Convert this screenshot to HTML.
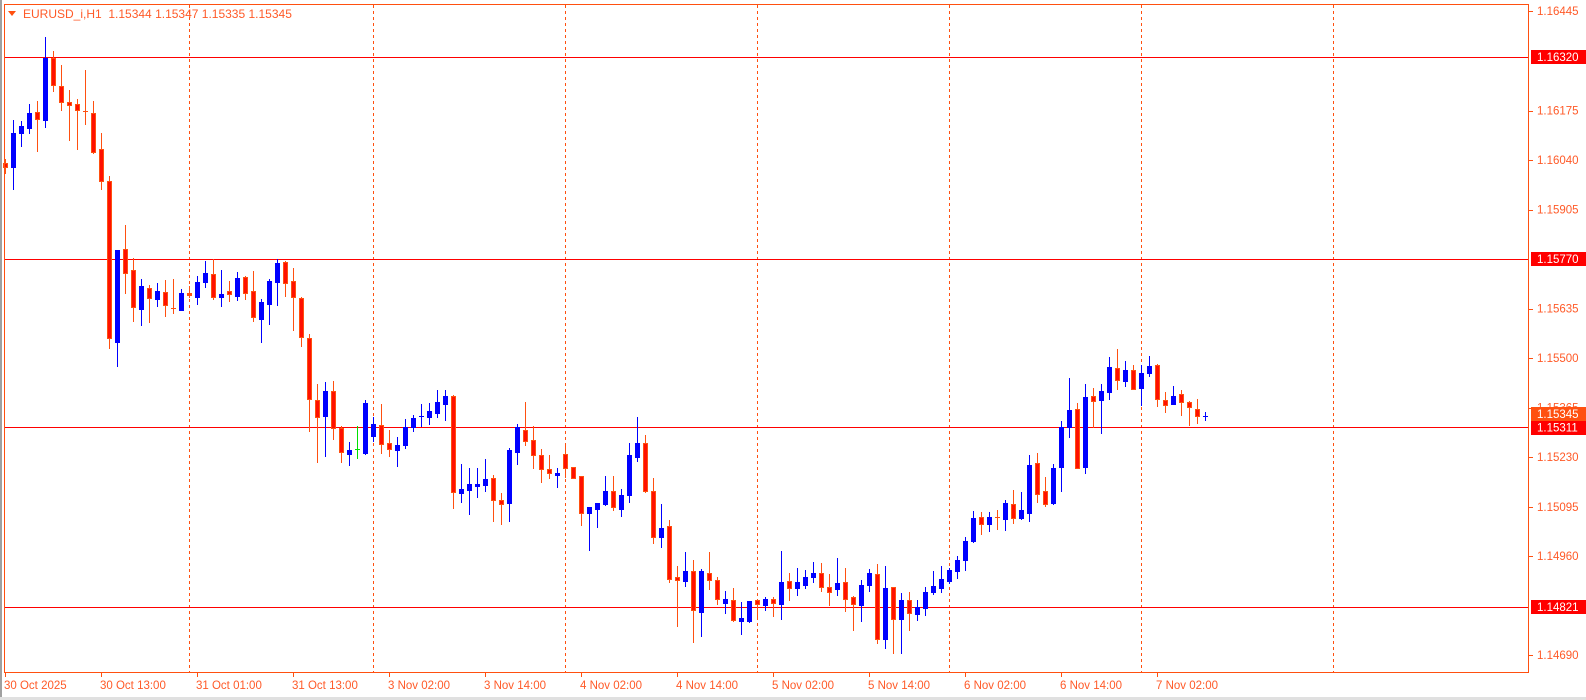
<!DOCTYPE html>
<html><head><meta charset="utf-8"><style>
html,body{margin:0;padding:0;background:#fff;width:1586px;height:700px;overflow:hidden}
svg{display:block}
text{font-family:"Liberation Sans",sans-serif;font-size:11.5px}
</style></head><body>
<svg id="s" width="1586" height="700" xmlns="http://www.w3.org/2000/svg">
<rect x="0" y="0" width="1586" height="700" fill="#fff"/>
<rect x="0" y="0" width="2" height="700" fill="#a0a0a0"/>
<rect x="0" y="697" width="1586" height="3" fill="#e0e0e0"/>
<g id="grid" stroke="#ff5010" stroke-width="1" stroke-dasharray="3,3" shape-rendering="crispEdges">
<line x1="189.5" y1="5" x2="189.5" y2="673"/><line x1="373.5" y1="5" x2="373.5" y2="673"/>
<line x1="565.5" y1="5" x2="565.5" y2="673"/><line x1="757.5" y1="5" x2="757.5" y2="673"/>
<line x1="949.5" y1="5" x2="949.5" y2="673"/><line x1="1141.5" y1="5" x2="1141.5" y2="673"/>
<line x1="1333.5" y1="5" x2="1333.5" y2="673"/>
</g>
<g stroke="#ff0000" stroke-width="1" shape-rendering="crispEdges">
<line x1="4" y1="57.5" x2="1529" y2="57.5"/><line x1="4" y1="259.5" x2="1529" y2="259.5"/>
<line x1="4" y1="427.5" x2="1529" y2="427.5"/><line x1="4" y1="607.5" x2="1529" y2="607.5"/>
</g>
<g id="candles" shape-rendering="crispEdges"></g>
<rect x="4.5" y="4.5" width="1524" height="668" fill="none" stroke="#ff5010" stroke-width="1" shape-rendering="crispEdges"/>
<polygon points="8,11 16,11 12,16" fill="#ff5010"/>
<text x="23" y="18" fill="#ff5a28" style="font-size:12px;white-space:pre" xml:space="preserve">EURUSD_i,H1  1.15344 1.15347 1.15335 1.15345</text>
<g id="axis" fill="#ff5a28"></g>
</svg>
<script>
var D=[[163,167,159,173,'r'],[133,167,120,189,'b'],[126,133,121,146,'b'],[113,128,104,133,'b'],[112,119,101,151,'r'],[58,120,37,127,'b'],[58,85,51,91,'r'],[86,102,65,110,'r'],[102,105,90,140,'r'],[104,110,99,149,'r'],[111,111,70,124,'r'],[113,152,101,153,'r'],[149,181,133,189,'r'],[181,338,176,348,'r'],[250,342,250,366,'b'],[249,273,225,293,'r'],[270,307,258,321,'r'],[286,309,279,325,'b'],[288,298,285,322,'r'],[291,299,283,306,'b'],[292,305,280,316,'r'],[308,309,279,313,'r'],[293,310,289,310,'b'],[293,295,286,297,'r'],[282,297,276,304,'b'],[273,282,261,287,'b'],[274,297,259,299,'r'],[294,297,270,306,'b'],[291,294,281,301,'r'],[278,296,272,300,'b'],[277,293,276,299,'r'],[291,317,271,321,'r'],[302,319,299,342,'b'],[281,304,279,324,'b'],[263,282,259,305,'b'],[262,283,261,296,'r'],[281,297,268,330,'r'],[298,337,297,346,'r'],[338,399,334,431,'r'],[400,417,384,462,'r'],[391,416,382,456,'b'],[391,428,381,439,'r'],[428,452,426,462,'r'],[450,454,442,465,'b'],[449,449,426,458,'g'],[403,453,400,454,'b'],[424,436,417,441,'b'],[425,444,404,453,'r'],[443,449,430,456,'r'],[445,450,437,466,'b'],[427,445,419,448,'b'],[418,427,415,431,'b'],[416,417,404,426,'b'],[411,417,403,424,'b'],[402,413,390,417,'b'],[396,404,390,420,'b'],[396,492,395,508,'r'],[489,493,464,502,'b'],[484,490,468,514,'b'],[484,486,468,497,'b'],[479,485,459,491,'b'],[478,500,475,521,'r'],[500,504,493,524,'r'],[450,503,448,521,'b'],[427,452,424,464,'b'],[430,441,402,445,'r'],[440,455,426,468,'r'],[455,469,449,482,'r'],[469,473,455,478,'r'],[473,475,468,487,'b'],[454,468,446,477,'r'],[467,478,467,478,'r'],[476,513,476,525,'r'],[507,513,507,550,'b'],[503,509,503,527,'b'],[491,504,476,505,'b'],[491,507,476,510,'r'],[495,509,489,516,'b'],[455,495,443,502,'b'],[443,457,417,461,'b'],[443,491,435,492,'r'],[491,537,478,543,'r'],[528,537,504,547,'b'],[526,579,520,582,'r'],[577,580,566,626,'r'],[571,581,552,586,'b'],[571,610,560,642,'r'],[571,612,569,636,'b'],[573,580,552,589,'r'],[580,599,577,604,'r'],[599,603,591,613,'b'],[600,620,588,621,'r'],[618,621,602,634,'b'],[601,621,601,622,'b'],[600,604,600,619,'r'],[599,605,597,610,'b'],[599,603,597,616,'r'],[582,604,551,619,'b'],[581,588,573,600,'r'],[582,588,568,595,'b'],[577,585,570,588,'b'],[573,577,562,582,'b'],[573,587,563,591,'r'],[587,592,574,605,'r'],[583,589,558,595,'b'],[582,599,568,611,'r'],[597,604,596,630,'r'],[585,605,580,621,'b'],[573,585,569,591,'b'],[574,639,564,643,'r'],[588,639,566,648,'b'],[587,619,587,653,'r'],[600,619,593,653,'b'],[600,613,592,630,'r'],[607,614,600,620,'b'],[592,608,587,615,'b'],[586,592,571,594,'b'],[579,588,566,592,'b'],[570,581,568,583,'b'],[560,571,556,578,'b'],[541,560,537,570,'b'],[518,541,511,542,'b'],[517,524,512,534,'r'],[517,524,512,531,'b'],[517,517,510,529,'r'],[503,519,500,530,'b'],[504,518,490,523,'r'],[510,518,492,519,'b'],[465,513,455,521,'b'],[463,494,453,502,'r'],[491,504,477,506,'r'],[468,503,464,504,'b'],[427,467,421,491,'b'],[410,427,378,437,'b'],[409,468,403,468,'r'],[397,467,384,473,'b'],[396,401,388,427,'r'],[391,400,384,433,'b'],[367,392,357,399,'b'],[368,380,349,389,'r'],[370,381,361,386,'b'],[370,389,365,389,'r'],[373,388,365,405,'b'],[366,373,356,376,'b'],[365,399,364,406,'r'],[400,405,392,412,'r'],[396,404,386,404,'b'],[394,402,390,415,'r'],[402,407,401,425,'r'],[409,416,399,423,'r'],[416,416,412,420,'b']];
var NS='http://www.w3.org/2000/svg',g=document.getElementById('candles');
function R(x,y,w,h,f){var r=document.createElementNS(NS,'rect');r.setAttribute('x',x);r.setAttribute('y',y);r.setAttribute('width',w);r.setAttribute('height',h);r.setAttribute('fill',f);g.appendChild(r);}
D.forEach(function(d,k){var cx=5+8*k,t=d[0],b=d[1],h=d[2],l=d[3],c=d[4];
 var wc=c=='b'?'#0000ff':(c=='g'?'#00e000':'#ff5010');
 R(cx,h,1,Math.max(1,l-h+1),wc);
 if(b-t<2){R(cx-2,t,5,1,wc);return;}
 if(c=='b'){R(cx-2,t,5,b-t+1,'#0000ff');}
 else{R(cx-2,t,5,b-t+1,'#ff5010');if(b-t>2)R(cx-1,t+1,3,b-t-1,'#ff1000');}
});
var a=document.getElementById('axis');
function T(x,y,s,f){var e=document.createElementNS(NS,'text');e.setAttribute('x',x);e.setAttribute('y',y);e.textContent=s;if(f)e.setAttribute('fill',f);a.appendChild(e);}
function B(x,y,w,h,f){var r=document.createElementNS(NS,'rect');r.setAttribute('x',x);r.setAttribute('y',y);r.setAttribute('width',w);r.setAttribute('height',h);r.setAttribute('fill',f);a.appendChild(r);}
var labs=[['1.16445',11],['1.16175',110.5],['1.16040',160],['1.15905',209.5],['1.15635',308.5],['1.15500',358],['1.15365',407.5],['1.15230',457],['1.15095',507],['1.14960',556],['1.14690',655]];
labs.forEach(function(p){B(1529,Math.round(p[1]),4,1,'#ff5010');T(1537,p[1]+4,p[0]);});
[['1.16320',57,'#ff0000'],['1.15770',259,'#ff0000'],['1.15345',414,'#ff5010'],['1.15311',427.5,'#ff0000'],['1.14821',607,'#ff0000']].forEach(function(p){B(1531,Math.round(p[1])-7,55,14,p[2]);T(1537,p[1]+4,p[0],'#ffffff');});
var dl=['30 Oct 2025','30 Oct 13:00','31 Oct 01:00','31 Oct 13:00','3 Nov 02:00','3 Nov 14:00','4 Nov 02:00','4 Nov 14:00','5 Nov 02:00','5 Nov 14:00','6 Nov 02:00','6 Nov 14:00','7 Nov 02:00'];
dl.forEach(function(s,i){var x=5+96*i;B(x,673,1,4,'#ff5010');T(x-1,689,s);});
</script>
</body></html>
